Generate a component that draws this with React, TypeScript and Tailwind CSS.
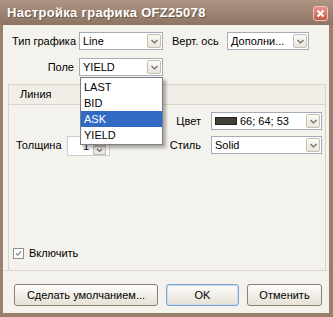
import React from 'react';

const font = { fontFamily: '"Liberation Sans", Arial, sans-serif' };

const Chevron: React.FC = () => (
  <svg width="9" height="9" viewBox="0 0 9 9" className="block">
    <path d="M1.5 3 L4.5 6 L7.5 3" fill="none" stroke="#6b6b6b" strokeWidth="1.2" />
  </svg>
);

const DropButton: React.FC = () => (
  <div className="w-[14px] h-[14px] flex items-center justify-center rounded-[2px] border border-[#c5bfb2] bg-gradient-to-b from-[#fbfaf7] to-[#e9e5db]">
    <Chevron />
  </div>
);

const Select: React.FC<{ width: string; children: React.ReactNode }> = ({ width, children }) => (
  <div className={`${width} h-[18px] shrink-0 flex items-center justify-between border border-[#a3acb7] bg-white pl-[3px] pr-[1px]`}>
    <div className="flex items-center text-[11px] text-black leading-none">{children}</div>
    <DropButton />
  </div>
);

const App: React.FC = () => {
  return (
    <div className="w-[333px] h-[317px] bg-[#9a7f6c] flex flex-col" style={font}>
      {/* title bar */}
      <div className="h-[25px] shrink-0 flex items-center justify-between pl-[7px] pr-[5px] bg-gradient-to-b from-[#ae9583] to-[#8e7462]">
        <span className="text-white font-bold text-[13px] tracking-[0.3px] leading-none [text-shadow:1px_1px_0_#6d5646]">
          Настройка графика OFZ25078
        </span>
        <div className="w-[15px] h-[15px] mt-[2px] rounded-[3px] border border-[#f0c2bc] bg-gradient-to-b from-[#e9958c] to-[#c9574d] flex items-center justify-center">
          <svg width="9" height="9" viewBox="0 0 9 9">
            <path d="M1.5 1.5 L7.5 7.5 M7.5 1.5 L1.5 7.5" stroke="#fff" strokeWidth="2" />
          </svg>
        </div>
      </div>

      {/* client area */}
      <div className="relative h-[288px] shrink-0 ml-[3px] mr-[4px] bg-[#f4f2ec] flex flex-col text-[11px] text-black">
        <div className="flex items-center h-[18px] mt-[7px]">
          <span className="w-[76px] pl-[9px]">Тип графика</span>
          <Select width="w-[84px]">Line</Select>
          <span className="ml-[9px] w-[55px]">Верт. ось</span>
          <Select width="w-[82px]">Дополни...</Select>
        </div>
        <div className="flex items-center h-[18px] mt-[8px]">
          <span className="w-[72px] text-right pr-[1px]">Поле</span>
          <span className="w-[4px]" />
          <Select width="w-[84px]">YIELD</Select>
        </div>

        {/* group panel */}
        <div className="mt-[8px] ml-[5px] w-[318px] h-[186px] border-x border-t border-[#d9d4c8] flex flex-col">
          <div className="h-[20px] shrink-0 flex items-center pl-[11px] border-b border-[#d9d4c8] bg-[#f1eee7]">Линия</div>
          <div className="flex flex-col pt-[7px]">
            <div className="flex items-center justify-end h-[18px] pr-[3px]">
              <span className="mr-[10px]">Цвет</span>
              <Select width="w-[111px]">
                <span className="w-[22px] h-[8px] bg-[#423f35] border border-[#222] mr-[3px]" />
                66; 64; 53
              </Select>
            </div>
            <div className="flex items-center justify-between h-[20px] mt-[5px] pr-[3px]">
              <div className="flex items-center">
                <span className="pl-[7px] w-[58px]">Толщина</span>
                <div className="w-[43px] h-[20px] mt-[2px] border border-[#c9ccd1] bg-white flex items-center justify-end pr-[3px]">
                  <span className="mr-[4px]">1</span>
                  <div className="flex flex-col">
                    <div className="w-[13px] h-[8px] border border-[#c5bfb2] bg-[#ece8df]" />
                    <div className="w-[13px] h-[9px] border border-[#c5bfb2] bg-[#ece8df] flex items-center justify-center">
                      <svg width="7" height="5" viewBox="0 0 7 5">
                        <path d="M1 1 L3.5 3.5 L6 1" fill="none" stroke="#6b6b6b" strokeWidth="1.1" />
                      </svg>
                    </div>
                  </div>
                </div>
              </div>
              <div className="flex items-center">
                <span className="mr-[10px]">Стиль</span>
                <Select width="w-[111px]">Solid</Select>
              </div>
            </div>
          </div>
          <div className="flex-1" />
          <div className="flex items-center ml-[4px] mb-[10px] h-[13px]">
            <div className="w-[11px] h-[11px] border border-[#8f8f8f] bg-white flex items-center justify-center">
              <svg width="7" height="7" viewBox="0 0 7 7">
                <path d="M1 3.5 L2.8 5.3 L6 1.3" fill="none" stroke="#7a7a7a" strokeWidth="1.1" />
              </svg>
            </div>
            <span className="ml-[5px]">Включить</span>
          </div>
        </div>

        <div className="h-[43px] shrink-0 border-t border-[#dcd7cc] flex items-start gap-[8px] pt-[13px] pl-[11px]">
          <button className="w-[144px] h-[22px] rounded-[3px] border border-[#8a8071] bg-gradient-to-b from-[#fdfcfa] to-[#e6e1d6] text-[11px]">
            Сделать умолчанием...
          </button>
          <button className="w-[73px] h-[22px] rounded-[3px] border border-[#7ea3cf] bg-gradient-to-b from-[#fdfcfa] to-[#e6e1d6] text-[11px] shadow-[inset_0_0_0_1px_#c7dcf2]">
            OK
          </button>
          <button className="w-[75px] h-[22px] rounded-[3px] border border-[#8a8071] bg-gradient-to-b from-[#fdfcfa] to-[#e6e1d6] text-[11px]">
            Отменить
          </button>
        </div>

        {/* open dropdown list */}
        <div className="absolute left-[77px] top-[52px] w-[83px] border border-[#7f7f7f] bg-white shadow-[3px_3px_3px_rgba(0,0,0,0.3)] py-[1px]">
          {['LAST', 'BID', 'ASK', 'YIELD'].map((item) => (
            <div
              key={item}
              className={`h-[16px] flex items-center pl-[3px] ${item === 'ASK' ? 'bg-[#316ac5] text-white' : ''}`}
            >
              {item}
            </div>
          ))}
        </div>
      </div>
    </div>
  );
};

export default App;
